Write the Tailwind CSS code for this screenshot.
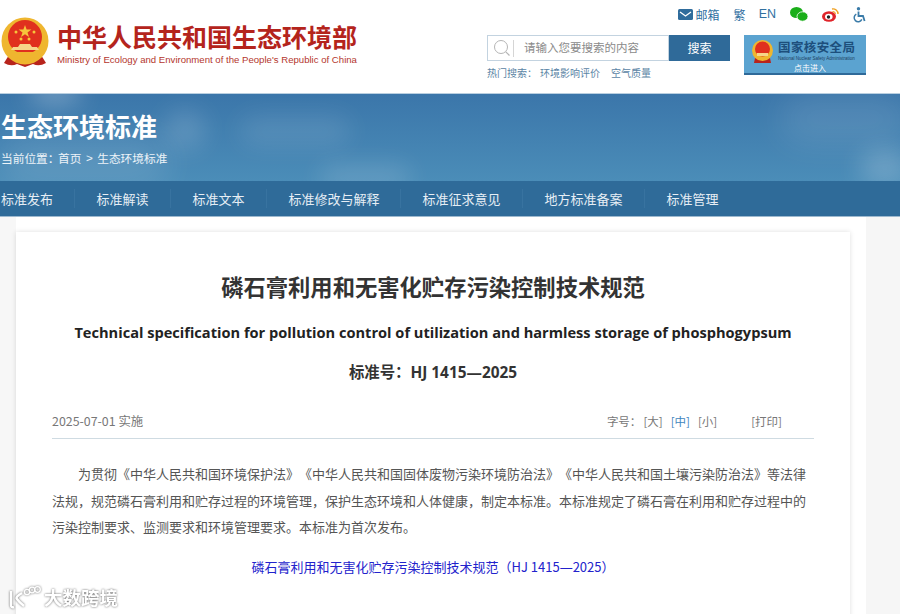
<!DOCTYPE html>
<html lang="zh-CN">
  <head>
    <meta charset="UTF-8" />
    <meta name="viewport" content="width=device-width, initial-scale=1.0" />
    <title>生态环境标准</title>
    <script src="https://cdn.jsdelivr.net/npm/@tailwindcss/browser@4"></script>
  </head>
  <body class="relative h-[614px] w-[900px] overflow-hidden bg-white font-['Noto_Sans_CJK_SC','Liberation_Sans',sans-serif] [text-spacing-trim:space-all]">
    <!-- Top header -->
    <header class="flex h-[93px]">
      <div class="flex w-[487px] pt-[17px] pl-px">
        <svg width="48" height="51" viewBox="0 0 48 51" class="shrink-0">
          <path d="M8 38 L3 46 Q10 50 16 47 L24 50 L32 47 Q38 50 45 46 L40 38 Z" fill="#b8241c" />
          <circle cx="24" cy="24" r="23.5" fill="#efb62f" />
          <circle cx="24" cy="20" r="17" fill="#e0301e" />
          <polygon points="24,8 25.6,12.6 30.4,12.6 26.5,15.4 28,20 24,17.2 20,20 21.5,15.4 17.6,12.6 22.4,12.6" fill="#f6c63c" />
          <circle cx="15" cy="15" r="1.5" fill="#f6c63c" />
          <circle cx="33" cy="15" r="1.5" fill="#f6c63c" />
          <circle cx="20" cy="22" r="1.5" fill="#f6c63c" />
          <circle cx="28" cy="22" r="1.5" fill="#f6c63c" />
          <path d="M10 33 H38 L36 30 H31 L29 27 H19 L17 30 H12 Z" fill="#f6d58a" />
          <path d="M9 35 H39 V38 H9 Z" fill="#efb62f" />
          <path d="M14 40 Q24 46 34 40 L32 44 Q24 48 16 44 Z" fill="#efb62f" />
        </svg>
        <div class="ml-2 flex flex-col">
          <div class="mt-[2px] text-[25px] leading-[34px] font-bold whitespace-nowrap text-[#b4241c]">中华人民共和国生态环境部</div>
          <div class="mt-[1px] font-['Liberation_Sans',sans-serif] text-[9.6px] leading-[12px] whitespace-nowrap text-[#b4362e]">Ministry of Ecology and Environment of the People's Republic of China</div>
        </div>
      </div>

      <div class="flex flex-col">
        <!-- Utility links -->
        <div class="flex h-[21px] items-center justify-end gap-[14px] pt-[8px] text-[12px] text-[#31709f]">
          <span class="flex items-center gap-[3px]">
            <svg width="15" height="11" viewBox="0 0 15 11"><rect width="15" height="11" rx="1.5" fill="#2f6c9c" /><path d="M2 3 L7.5 7 L13 3" fill="none" stroke="#fff" stroke-width="1.3" /></svg>
            邮箱
          </span>
          <span class="-mr-px">繁</span>
          <span class="font-['Liberation_Sans',sans-serif] text-[12.5px]">EN</span>
          <svg width="18" height="15" viewBox="0 0 18 15">
            <ellipse cx="6.5" cy="5.5" rx="6.5" ry="5.5" fill="#1aae19" />
            <ellipse cx="12.5" cy="9.5" rx="5.5" ry="4.7" fill="#1aae19" stroke="#fff" stroke-width="0.8" />
          </svg>
          <svg width="17" height="15" viewBox="0 0 17 15">
            <ellipse cx="7" cy="9.5" rx="7" ry="5.2" fill="#e0242a" />
            <ellipse cx="6.8" cy="9.7" rx="3.8" ry="3" fill="#fff" />
            <circle cx="6.5" cy="10" r="1.7" fill="#222" />
            <path d="M10 2 A5 5 0 0 1 16 7" fill="none" stroke="#f0a020" stroke-width="1.4" />
            <path d="M10.5 4.6 A2.5 2.5 0 0 1 13.4 7" fill="none" stroke="#f0a020" stroke-width="1.1" />
          </svg>
          <svg width="14" height="16" viewBox="0 0 14 16" class="-ml-px">
            <circle cx="6.5" cy="1.8" r="1.7" fill="#3a7ba8" />
            <path d="M6.5 4.5 V9 H11 L12.6 14" fill="none" stroke="#3a7ba8" stroke-width="1.8" />
            <path d="M4.3 7.2 A4 4 0 1 0 9.8 12.4" fill="none" stroke="#3a7ba8" stroke-width="1.5" />
          </svg>
        </div>

        <div class="mt-[14px] flex gap-[14px]">
          <div>
            <!-- Search -->
            <div class="flex h-[26px] w-[243px]">
              <div class="flex w-[182px] items-center border border-[#c3d3e0] bg-white">
                <svg width="18" height="18" viewBox="0 0 18 18" class="ml-[5px]">
                  <circle cx="8" cy="8" r="6.5" fill="none" stroke="#b5b5b5" stroke-width="1" />
                  <path d="M12.8 12.8 L16.5 16.5" stroke="#b5b5b5" stroke-width="1.2" />
                </svg>
                <span class="ml-[2px] h-[17px] border-l border-[#d5d5d5]"></span>
                <span class="ml-[10px] text-[11.5px] whitespace-nowrap text-[#8a8a8a]">请输入您要搜索的内容</span>
              </div>
              <div class="flex flex-1 items-center justify-center bg-[#2f6a99] text-[12px] text-white">搜索</div>
            </div>
            <div class="mt-[4px] flex text-[10px] leading-[16px] whitespace-nowrap text-[#5b84a5]">
              <span class="mr-[3px]">热门搜索：</span>
              <span class="mr-[11px]">环境影响评价</span>
              <span>空气质量</span>
            </div>
          </div>
          <!-- NNSA banner -->
          <div class="flex h-[40px] w-[122px] flex-col border-b-2 border-[#2f6a99] bg-[#5ba3d0]">
            <div class="flex flex-1 items-start pt-[3px] pl-[8px]">
              <svg width="21" height="24" viewBox="0 0 21 24" class="mt-[2px] shrink-0">
                <path d="M3 18 L2 23 H19 L18 18 Z" fill="#b8241c" />
                <circle cx="10.5" cy="10.5" r="10.5" fill="#efb62f" />
                <circle cx="10.5" cy="9" r="7.5" fill="#e0301e" />
                <rect x="5" y="13" width="11" height="3" fill="#f6d58a" />
              </svg>
              <div class="ml-[5px] flex flex-col">
                <span class="text-[12.5px] leading-[18px] font-bold tracking-[0.4px] whitespace-nowrap text-[#1d4f7c]">国家核安全局</span>
                <span class="font-['Liberation_Sans',sans-serif] text-[4.5px] leading-[6px] whitespace-nowrap text-[#1d3f60]">National Nuclear Safety Administration</span>
                <span class="mt-px ml-[16px] text-[8px] leading-[10px] whitespace-nowrap text-white">点击进入</span>
              </div>
            </div>
          </div>
        </div>
      </div>
    </header>

    <!-- Banner -->
    <section class="relative h-[88px] overflow-hidden border-t border-[#b9cfe0] bg-gradient-to-b from-[#3b76aa] to-[#4b8db8]">
      <div class="absolute top-[16px] left-[165px] h-[40px] w-[40px] rounded-full bg-white/15 blur-md"></div>
      <div class="absolute top-[22px] left-[240px] h-[30px] w-[110px] rounded-full bg-white/10 blur-md"></div>
      <div class="absolute -top-[12px] left-[30px] h-[22px] w-[50px] rounded-full bg-white/30 blur-md"></div>
      <div class="absolute top-[40px] left-0 h-[60px] w-[170px] rounded-full bg-white/10 blur-lg"></div>
      <div class="absolute top-[72px] left-[320px] h-[24px] w-[90px] rounded-full bg-white/15 blur-md"></div>
      <div class="absolute top-[56px] left-[860px] h-[36px] w-[50px] rounded-full bg-white/20 blur-md"></div>
      <div class="absolute top-0 left-[780px] h-[50px] w-[130px] rounded-full bg-white/10 blur-lg"></div>
      <div class="relative pt-[14px] pl-px">
        <h1 class="text-[26px] leading-[36px] font-bold text-white">生态环境标准</h1>
        <p class="mt-[6px] flex text-[11.7px] leading-[16px] whitespace-nowrap text-white/90">
          <span class="w-[57px]">当前位置：</span>
          <span>首页</span>
          <span class="mx-[4.5px] font-['Liberation_Sans',sans-serif]">&gt;</span>
          <span>生态环境标准</span>
        </p>
      </div>
    </section>

    <!-- Nav -->
    <nav class="flex h-[36px] items-center border-b border-[#9db9cf] bg-[#2f6b99] text-[13px] whitespace-nowrap text-[#e6eef5]">
      <a class="pl-px pr-[21px]">标准发布</a>
      <a class="border-l border-[#3873a0] px-[21.5px]">标准解读</a>
      <a class="border-l border-[#3873a0] px-[21.5px]">标准文本</a>
      <a class="border-l border-[#3873a0] pl-[21.5px] pr-[20.5px]">标准修改与解释</a>
      <a class="border-l border-[#3873a0] px-[21.5px]">标准征求意见</a>
      <a class="border-l border-[#3873a0] px-[21.5px]">地方标准备案</a>
      <a class="border-l border-[#3873a0] px-[21.5px]">标准管理</a>
    </nav>

    <!-- Article -->
    <main class="flex h-[397px] bg-[linear-gradient(to_right,#f7f7f7_16px,#ffffff_16px,#ffffff_866px,#f6f6f6_866px)] pt-[15px] pl-[16px]">
      <article class="h-[400px] w-[834px] bg-white px-[36px] shadow-[0_0_5px_rgba(0,0,0,0.13)]">
        <h2 class="mt-[39px] text-center text-[22.3px] leading-[30px] font-bold text-[#333]">磷石膏利用和无害化贮存污染控制技术规范</h2>
        <p class="mt-[19px] text-center font-['Open_Sans',sans-serif] text-[14.6px] leading-[24px] font-bold whitespace-nowrap text-[#222]">Technical specification for pollution control of utilization and harmless storage of phosphogypsum</p>
        <p class="mt-[15px] text-center text-[15.4px] leading-[24px] font-bold text-[#333]">标准号：<span class="font-['Open_Sans',sans-serif]">HJ 1415—2025</span></p>

        <div class="mt-[20px] flex h-[34px] items-center justify-between border-b border-[#cfdbe2] text-[11.5px] text-[#777]">
          <span class="text-[12.4px]">2025-07-01 实施</span>
          <div class="flex pr-[32px]">
            <span>字号：</span>
            <span class="ml-[2px]">[大]</span>
            <span class="ml-[8px] text-[#3f86bd]">[中]</span>
            <span class="ml-[8px]">[小]</span>
            <span class="ml-[34px]">[打印]</span>
          </div>
        </div>

        <p class="mt-[22px] text-[13px] leading-[26.5px] text-[#555] indent-[26px]">为贯彻《中华人民共和国环境保护法》《中华人民共和国固体废物污染环境防治法》《中华人民共和国土壤污染防治法》等法律法规，规范磷石膏利用和贮存过程的环境管理，保护生态环境和人体健康，制定本标准。本标准规定了磷石膏在利用和贮存过程中的污染控制要求、监测要求和环境管理要求。本标准为首次发布。</p>
        <p class="mt-[14px] text-center text-[13px] leading-[24px] text-[#2222cc]">磷石膏利用和无害化贮存污染控制技术规范（HJ 1415<span class="font-['Open_Sans',sans-serif]">—</span>2025）</p>
      </article>
    </main>

    <!-- Watermark -->
    <div class="absolute top-[584px] left-[9px] flex items-center gap-[3px] text-white drop-shadow-[0_0_1px_rgba(0,0,0,0.6)]">
      <svg width="32" height="24" viewBox="0 0 32 24" fill="none" stroke="#fff" stroke-width="2.4">
        <path d="M2 6 V20 Q2 23 5 22" />
        <path d="M13 8 Q6 12 8 14 Q10 17 15 21" />
        <circle cx="18" cy="7" r="2.6" stroke-width="1.3" />
        <circle cx="23" cy="5" r="2.8" stroke-width="1.3" />
        <circle cx="28.5" cy="4.5" r="2.8" stroke-width="1.3" />
      </svg>
      <span class="text-[18.5px] leading-[26px] font-bold">大数跨境</span>
    </div>
  </body>
</html>
